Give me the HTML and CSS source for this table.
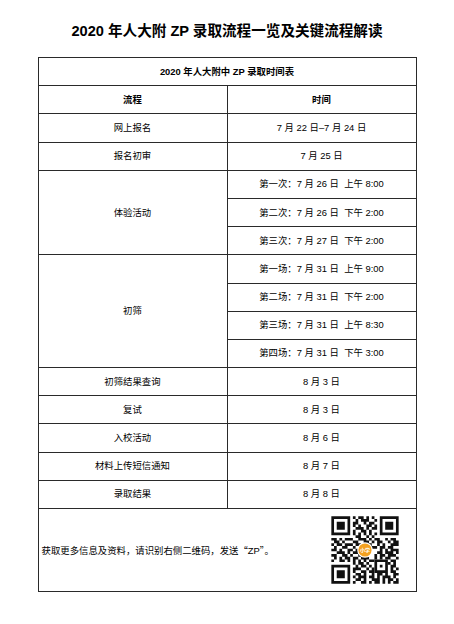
FILE: index.html
```html
<!DOCTYPE html>
<html lang="zh-CN">
<head>
<meta charset="utf-8">
<title>2020 年人大附 ZP 录取流程</title>
<link rel="stylesheet" href="styles.css">
</head>
<body>
<div class="page">
  <h1 class="title">2020 年人大附 ZP 录取流程一览及关键流程解读</h1>
  <table class="schedule">
    <tbody>
      <tr class="caption-row"><td colspan="2" class="bold">2020 年人大附中 ZP 录取时间表</td></tr>
      <tr><td class="bold">流程</td><td class="bold">时间</td></tr>
      <tr><td>网上报名</td><td>7 月 22 日–7 月 24 日</td></tr>
      <tr><td>报名初审</td><td>7 月 25 日</td></tr>
      <tr><td rowspan="3">体验活动</td><td>第一次：7 月 26 日&nbsp; 上午 8:00</td></tr>
      <tr><td>第二次：7 月 26 日&nbsp; 下午 2:00</td></tr>
      <tr><td>第三次：7 月 27 日&nbsp; 下午 2:00</td></tr>
      <tr><td rowspan="4">初筛</td><td>第一场：7 月 31 日&nbsp; 上午 9:00</td></tr>
      <tr><td>第二场：7 月 31 日&nbsp; 下午 2:00</td></tr>
      <tr><td>第三场：7 月 31 日&nbsp; 上午 8:30</td></tr>
      <tr><td>第四场：7 月 31 日&nbsp; 下午 3:00</td></tr>
      <tr><td>初筛结果查询</td><td>8 月 3 日</td></tr>
      <tr><td>复试</td><td>8 月 3 日</td></tr>
      <tr><td>入校活动</td><td>8 月 6 日</td></tr>
      <tr><td>材料上传短信通知</td><td>8 月 7 日</td></tr>
      <tr><td>录取结果</td><td>8 月 8 日</td></tr>
      <tr class="footer-row">
        <td colspan="2">
          <div class="footer">
            <p class="footer-text">获取更多信息及资料，请识别右侧二维码，发送<span class="cjk-punct">“</span>ZP<span class="cjk-punct">”</span>。</p>
            <svg class="qr" viewBox="-0.5 -0.5 26 26" width="70" height="70" aria-label="二维码">
              <rect x="-0.5" y="-0.5" width="26" height="26" fill="#fff"/>
              <g fill="#111">
                <path fill-rule="evenodd" d="M0 0h7v7h-7z M1 1v5h5v-5z M18 0h7v7h-7z M19 1v5h5v-5z M0 18h7v7h-7z M1 19v5h5v-5z M16 16h5v5h-5z M17 17v3h3v-3z"/>
                <path d="M2 2h3v3h-3z M20 2h3v3h-3z M2 20h3v3h-3z M18 18h1v1h-1z"/>
                <path d="M8 0h1v1h-1z M10 0h2v1h-2z M13 0h1v1h-1z M15 0h1v1h-1z
                M9 1h1v1h-1z M11 1h3v1h-3z M16 1h1v1h-1z
                M8 2h2v1h-2z M12 2h1v1h-1z M14 2h2v1h-2z
                M8 3h1v1h-1z M10 3h1v1h-1z M13 3h2v1h-2z M16 3h1v1h-1z
                M9 4h3v1h-3z M13 4h1v1h-1z M15 4h2v1h-2z
                M8 5h1v1h-1z M11 5h2v1h-2z M14 5h1v1h-1z
                M8 6h1v1h-1z M10 6h1v1h-1z M12 6h1v1h-1z M14 6h1v1h-1z M16 6h1v1h-1z
                M9 7h2v1h-2z M13 7h1v1h-1z M15 7h1v1h-1z
                M0 8h2v1h-2z M3 8h1v1h-1z M5 8h3v1h-3z M10 8h3v1h-3z M14 8h1v1h-1z M16 8h2v1h-2z M20 8h1v1h-1z M22 8h2v1h-2z
                M1 9h2v1h-2z M4 9h1v1h-1z M8 9h2v1h-2z M12 9h2v1h-2z M15 9h1v1h-1z M17 9h2v1h-2z M21 9h1v1h-1z M23 9h2v1h-2z
                M0 10h1v1h-1z M2 10h2v1h-2z M5 10h3v1h-3z M9 10h2v1h-2z M13 10h2v1h-2z M17 10h1v1h-1z M19 10h1v1h-1z M22 10h3v1h-3z
                M1 11h1v1h-1z M4 11h2v1h-2z M8 11h1v1h-1z M11 11h2v1h-2z M14 11h3v1h-3z M18 11h2v1h-2z M21 11h2v1h-2z
                M0 12h2v1h-2z M3 12h1v1h-1z M6 12h2v1h-2z M9 12h3v1h-3z M18 12h1v1h-1z M20 12h1v1h-1z M22 12h3v1h-3z
                M2 13h3v1h-3z M6 13h1v1h-1z M8 13h2v1h-2z M17 13h2v1h-2z M20 13h3v1h-3z M24 13h1v1h-1z
                M0 14h2v1h-2z M4 14h2v1h-2z M7 14h1v1h-1z M10 14h1v1h-1z M16 14h1v1h-1z M18 14h2v1h-2z M21 14h2v1h-2z M23 14h1v1h-1z
                M1 15h1v1h-1z M3 15h1v1h-1z M5 15h2v1h-2z M8 15h2v1h-2z M11 15h3v1h-3z M16 15h1v1h-1z M18 15h1v1h-1z M20 15h2v1h-2z M24 15h1v1h-1z
                M0 16h1v1h-1z M3 16h2v1h-2z M6 16h1v1h-1z M8 16h1v1h-1z M10 16h1v1h-1z M12 16h1v1h-1z M14 16h2v1h-2z M22 16h2v1h-2z
                M8 17h1v1h-1z M10 17h2v1h-2z M13 17h1v1h-1z M21 17h1v1h-1z M23 17h1v1h-1z
                M9 18h1v1h-1z M11 18h2v1h-2z M14 18h1v1h-1z M22 18h2v1h-2z
                M8 19h3v1h-3z M13 19h1v1h-1z M15 19h1v1h-1z M22 19h1v1h-1z M24 19h1v1h-1z
                M8 20h1v1h-1z M11 20h2v1h-2z M14 20h2v1h-2z M22 20h2v1h-2z
                M9 21h2v1h-2z M12 21h1v1h-1z M15 21h1v1h-1z M17 21h2v1h-2z M20 21h1v1h-1z M23 21h2v1h-2z
                M8 22h1v1h-1z M10 22h3v1h-3z M14 22h2v1h-2z M17 22h1v1h-1z M19 22h3v1h-3z M23 22h1v1h-1z
                M9 23h2v1h-2z M12 23h1v1h-1z M15 23h3v1h-3z M19 23h1v1h-1z M21 23h2v1h-2z M24 23h1v1h-1z
                M8 24h1v1h-1z M11 24h2v1h-2z M14 24h1v1h-1z M16 24h2v1h-2z M19 24h1v1h-1z M21 24h1v1h-1z M23 24h2v1h-2z"/>
              </g>
              <circle cx="12.5" cy="12.5" r="2.9" fill="#fff"/>
              <circle cx="12.5" cy="12.5" r="2.45" fill="#f4a11f"/>
              <text x="12.5" y="13.25" class="qr-logo-text" text-anchor="middle">小学</text>
            </svg>
          </div>
        </td>
      </tr>
    </tbody>
  </table>
</div>
</body>
</html>
```

FILE: styles.css
```css
html, body {
  margin: 0;
  padding: 0;
  background: #ffffff;
}

body {
  font-family: "Liberation Sans", "Noto Sans CJK SC", sans-serif;
  color: #000000;
}

.page {
  width: 379px;
  margin: 0 auto;
  padding-top: 21px;
}

.title {
  margin: 0 0 16px;
  font-size: 14.6px;
  line-height: 20px;
  font-weight: bold;
  text-align: center;
  color: #000000;
  white-space: nowrap;
}

.schedule {
  width: 379px;
  border-collapse: collapse;
  table-layout: fixed;
  border: 1.5px solid #6e6e6e;
}

.schedule td {
  width: 50%;
  height: 27.2px;
  padding: 0;
  border: 1px solid #2a2a2a;
  text-align: center;
  vertical-align: middle;
  font-size: 9.4px;
  line-height: 12px;
  white-space: nowrap;
  color: #000000;
}

.schedule td.bold {
  font-weight: bold;
  color: #000000;
}

.schedule .footer-row td {
  height: 82px;
  text-align: left;
}

.footer {
  display: flex;
  align-items: center;
  justify-content: space-between;
  padding: 0 16px 0 3px;
}

.footer-text {
  margin: 0;
  font-size: 9.4px;
  line-height: 12px;
}

.cjk-punct {
  font-family: "Noto Sans CJK SC", sans-serif;
}

.qr {
  display: block;
  width: 70px;
  height: 70px;
}

.qr-logo-text {
  font-family: "Noto Sans CJK SC", sans-serif;
  font-size: 1.9px;
  font-weight: bold;
  fill: #ffffff;
}
```
